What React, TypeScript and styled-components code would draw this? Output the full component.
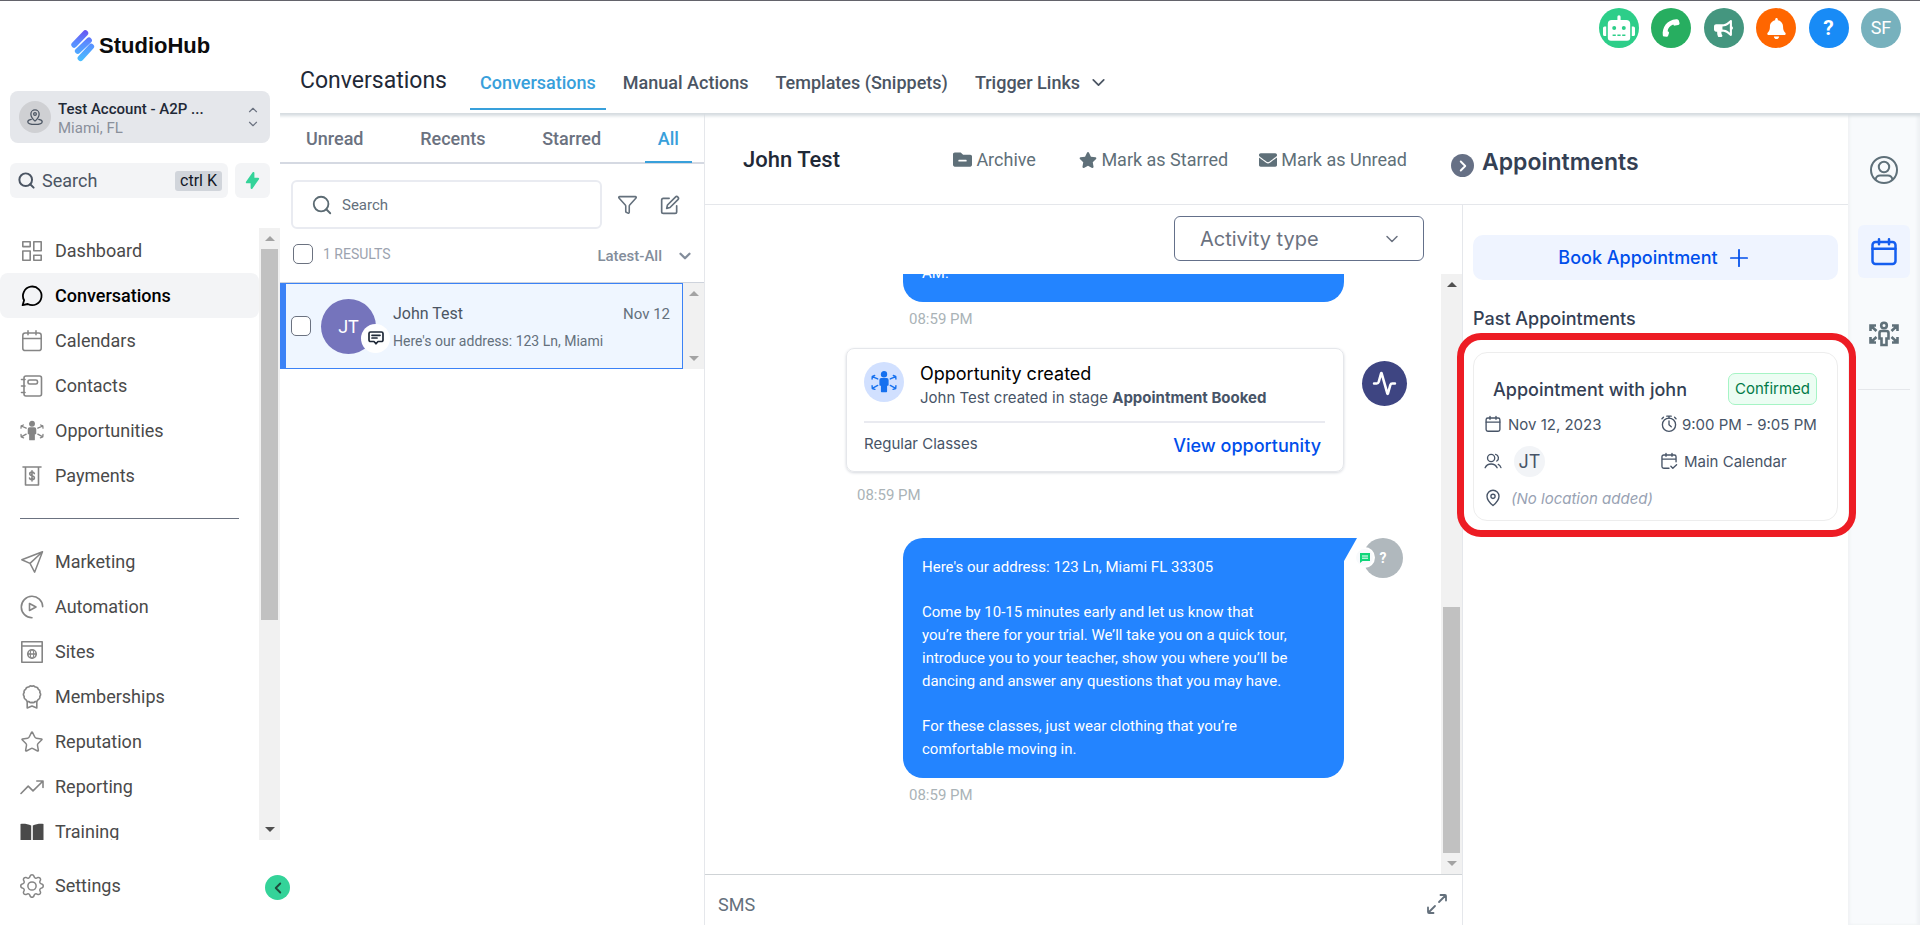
import React from "react";
import styled, { createGlobalStyle } from "styled-components";
import { Search, Funnel, ChevronDown, ChevronUp, ChevronRight, ChevronLeft, Plus, Activity, Star } from "lucide-react";
import { FaRobot, FaBullhorn, FaBell, FaFolderMinus, FaStar, FaEnvelope } from "react-icons/fa";
import { BsGear } from "react-icons/bs";
import { FiEdit } from "react-icons/fi";
import { HiLightningBolt } from "react-icons/hi";

const GlobalStyle = createGlobalStyle`
  * { box-sizing: border-box; }
  body { margin: 0; background: #fff; font-family: Roboto, sans-serif; color: #4b5563; }
  button, input, select { font: inherit; color: inherit; margin: 0; }
  button { background: none; border: 0; padding: 0; cursor: pointer; }
  a { color: inherit; text-decoration: none; }
  h1, h2, h3, p { margin: 0; padding: 0; font-weight: inherit; }
  svg { flex: none; display: block; }
`;

/* ---------- icons ---------- */

type LineProps = { size: number; box?: number; weight?: number; children: React.ReactNode };
const Line = ({ size, box = 24, weight = 2, children }: LineProps) => (
  <svg width={size} height={size} viewBox={`0 0 ${box} ${box}`} fill="none" stroke="currentColor"
    strokeWidth={weight} strokeLinecap="round" strokeLinejoin="round" aria-hidden="true">{children}</svg>
);

const DashboardIcon = () => (
  <Line size={24} weight={1.6}><rect x="2.8" y="2.8" width="7.4" height="4.8" /><rect x="13.8" y="2.8" width="7.4" height="9" />
    <rect x="2.8" y="12" width="7.4" height="9.2" /><rect x="13.8" y="16.2" width="7.4" height="5" /></Line>
);
const ChatIcon = () => (
  <Line size={24} weight={1.8}><path d="M2.6 21.2l1.5-4.9A9.3 9.3 0 1 1 7.8 20z" /></Line>
);
const CalendarIcon = ({ size = 24, weight = 1.5 }) => (
  <Line size={size} weight={weight}><rect x="2.8" y="4" width="18.4" height="17.6" rx="2.4" /><path d="M2.8 9.4h18.4M8 1.8v4M16 1.8v4" /></Line>
);
const CalendarCheckIcon = () => (
  <Line size={18} weight={1.8}><path d="M21.4 13V6.4A2.4 2.4 0 0 0 19 4H5a2.4 2.4 0 0 0-2.4 2.4V19.2A2.4 2.4 0 0 0 5 21.6h7M2.8 9.4h18.4M8 1.8v4M16 1.8v4M14.5 19l2.600 2.600 5-4.600" /></Line>
);
const ContactsIcon = () => (
  <Line size={24} weight={1.6}><rect x="4" y="2" width="17.5" height="20" rx="2" /><rect x="8" y="6" width="9.5" height="4" rx="1.6" />
    <path d="M1.5 5.500H5M1.5 12H5M1.5 18.500H5" /></Line>
);
const PersonArrowsIcon = ({ size = 24 }) => (
  <Line size={size} weight={1.3}>
    <circle cx="12" cy="4.8" r="2.3" fill="currentColor" />
    <path d="M9.6 9h4.8a1.2 1.2 0 0 1 1.2 1.200v4.500h-1.400v6H9.800v-6H8.400v-4.500A1.200 1.200 0 0 1 9.600 9z" fill="currentColor" />
    <path d="M6.200 9.200L1.200 7M1 9.200l.2-2.400 2.200-.8M6.200 15.200l-5 2.600M1 15.400l.2 2.600 2.400.8M17.800 9.200l5-2.200M23 9.200l-.2-2.400-2.200-.8M17.800 15.200l5 2.600M23 15.400l-.2 2.600-2.400.8" />
  </Line>
);
const RailPeopleIcon = () => (
  <svg width="32" height="26" viewBox="0 0 32 26" fill="none" stroke="currentColor" strokeWidth="2.6" aria-hidden="true">
    <circle cx="16" cy="4.5" r="2.8" />
    <path d="M13.5 10h5a2 2 0 0 1 2 2v5.500h-2V24h-5v-6.500h-2V12a2 2 0 0 1 2-2z" />
    <path d="M2.500 10V4.500H8M2.500 4.500l6 5.500M29.500 10V4.500H24M29.500 4.500l-6 5.500M2.500 16v5.500H8M2.500 21.500l6-5.500M29.500 16v5.500H24M29.500 21.500l-6-5.500" />
  </svg>
);
const PaymentsIcon = () => (
  <Line size={24} weight={1.6}><path d="M3 3h18M5.500 3v18h13V3" /><path d="M14.300 9.600c-.3-1-1.200-1.500-2.300-1.500-1.300 0-2.300.6-2.300 1.800 0 2.500 4.700 1.300 4.700 3.900 0 1.200-1 1.900-2.400 1.900-1.300 0-2.300-.6-2.500-1.700M12 6.800v10.200" /></Line>
);
const MarketingIcon = () => (
  <Line size={24} weight={1.5}><path d="M22.500 1.800L1.800 9.800l8.200 3.600 4.600 8.800zM10 13.400L22.500 1.800" /></Line>
);
const AutomationIcon = () => (
  <Line size={24} weight={1.6}><path d="M12 22.700A10.700 10.700 0 1 1 22.700 11.600" /><path d="M9.500 8.500v7l6.500-3.500z" /></Line>
);
const SitesIcon = () => (
  <Line size={24} weight={1.6}><path d="M1.800 1.800h20.400v20.400H1.800zM1.800 6h20.400" /><circle cx="12" cy="14" r="4.200" /><path d="M7.800 14h8.400" />
    <ellipse cx="12" cy="14" rx="1.700" ry="4.200" strokeWidth="1.1" /></Line>
);
const AwardIcon = () => (
  <Line size={24} weight={1.6}>
    <path d="M12 1.200Q14 .2 15.200 2 17.800 1.800 18.200 4.200 20.600 5.200 19.800 7.600 21.400 9.600 19.800 11.400 20.400 13.800 18 14.800 17.400 17 15 16.600 13.600 18.200 12 17.200 10.400 18.200 9 16.600 6.600 17 6 14.800 3.600 13.800 4.200 11.400 2.600 9.600 4.200 7.600 3.400 5.200 5.800 4.200 6.200 1.800 8.800 2 10 .2 12 1.200z" />
    <path d="M7.200 17v6l4.800-2 4.800 2v-6" />
  </Line>
);
const ReportingIcon = () => (
  <Line size={24} weight={1.6}><path d="M1 18.500l7.200-7.400 4.800 4.800L23 6M16.800 6H23v6.400" /></Line>
);
const TrainingIcon = () => (
  <svg width="24" height="24" viewBox="0 0 24 24" fill="#4a4a4a" aria-hidden="true">
    <path d="M.5 4C4 3.600 8 4 11.200 5.600V22C8 20.500 4 20 .5 20.200zM23.500 4C20 3.600 16 4 12.800 5.600V22c3.200-1.500 7.200-2 10.700-1.800z" />
  </svg>
);
const PlaceIcon = () => (
  <Line size={18} weight={1.7}><path d="M12 17.500s-5.500-4.600-5.500-9.400a5.500 5.500 0 0 1 11 0c0 4.800-5.500 9.400-5.500 9.400z" /><circle cx="12" cy="8" r="1.8" />
    <path d="M7 15.200c-2.700.5-4.600 1.600-4.600 3 0 2 4.300 3.600 9.600 3.600s9.600-1.600 9.600-3.600c0-1.400-1.900-2.500-4.600-3" /></Line>
);
const PinIcon = () => (
  <Line size={18} weight={1.8}><path d="M12 22s-8-6.500-8-12.400a8 8 0 0 1 16 0C20 15.500 12 22 12 22z" /><circle cx="12" cy="9.800" r="2.8" /></Line>
);
const UsersIcon = () => (
  <Line size={18} weight={1.8}><circle cx="9.500" cy="8" r="4.800" /><path d="M1.500 21c1.600-3.400 4.500-5 8-5s6.400 1.600 8 5M15.500 3.200a4.900 4.900 0 0 1 1.600 8.800M19 16.600c1.700.8 2.900 2.200 3.600 4.200" /></Line>
);
const StopwatchIcon = () => (
  <Line size={18} weight={1.8}><circle cx="12" cy="13" r="8.800" /><path d="M12 8v5l3 2.600M9 1.500h6M12 1.500v2.600M2.600 5l2-2M21.400 5l-2-2" /></Line>
);
const PhoneIcon = () => (
  <svg width="20" height="20" viewBox="0 0 20 20" fill="#fff" aria-hidden="true">
    <path d="M1.800 17.200C.8 9.600 6 1.800 15.200 1.200c1.300-.1 2.300.4 2.700 1.500l.6 2.400c.2 1-.3 1.700-1.300 1.900l-3 .6c-1 .2-1.500-.2-2-1.200C8.600 7.800 7 10 6.600 13.200c1 .3 1.500.8 1.400 1.700l-.7 2.300c-.3 1-1 1.500-1.900 1.500l-1.900-.1c-1 0-1.600-.5-1.700-1.400z" />
  </svg>
);
const ProfileIcon = () => (
  <Line size={30} box={30} weight={2}><circle cx="15" cy="15" r="13" /><circle cx="15" cy="12" r="5.200" /><path d="M6.500 24.500c.6-2.700 2.300-4 4.600-4h7.800c2.300 0 4 1.300 4.600 4" /></Line>
);
const SmsBadgeIcon = () => (
  <Line size={18} box={18} weight={1.7}><path d="M3.500 3h11a1.500 1.500 0 0 1 1.500 1.500v6.500a1.500 1.500 0 0 1-1.500 1.500H11l-2 2.300-2-2.300H3.500A1.500 1.500 0 0 1 2 11V4.500A1.500 1.500 0 0 1 3.500 3zM5 6.300h8M5 9h5" /></Line>
);
const GreenChatIcon = () => (
  <svg width="12" height="12" viewBox="0 0 12 12" aria-hidden="true"><path d="M1 1h10v8H3.500L1 11z" fill="#0fd67a" /><path d="M3 4h6M3 6.200h6" stroke="#fff" strokeWidth="1" /></svg>
);
const ExpandIcon = () => (
  <Line size={22} box={22} weight={1.8}><path d="M13 9l6.500-6.500M14.500 2H19a1 1 0 0 1 1 1v4.500M9 13l-6.500 6.500M2 14.500V19a1 1 0 0 0 1 1h4.500" /></Line>
);
const BrandMark = () => (
  <svg width="24" height="34" viewBox="0 0 24 34" aria-hidden="true">
    <defs><linearGradient id="brand" x1="0" y1="0" x2="0" y2="34" gradientUnits="userSpaceOnUse">
      <stop offset="0" stopColor="#6a4cf0" /><stop offset=".4" stopColor="#5b8bff" /><stop offset="1" stopColor="#45c4ff" /></linearGradient></defs>
    <path d="M3.200 15.800L14.300 4.200M6.800 22L18 11.400M9.500 29.200L20.200 17.600" fill="none" stroke="url(#brand)" strokeWidth="5.800" strokeLinecap="round" />
  </svg>
);

/* ---------- scrollbar ---------- */

const ScrollTrack = styled.div`
  display: flex; flex-direction: column; align-items: center; flex: none;
  width: 21px; background: #f1f1f1;
`;
const ScrollArrow = styled.span<{ $dark?: boolean; $down?: boolean }>`
  display: flex; flex: none; height: 21px; align-items: center;
  &::before {
    content: ""; border: 5px solid transparent; border-top-width: 0;
    border-bottom-color: ${p => (p.$dark ? "#505050" : "#a3a3a3")};
    ${p => p.$down && "transform: rotate(180deg);"}
  }
`;
const ScrollLane = styled.div<{ $end?: boolean }>`
  display: flex; flex-direction: column; flex: 1; min-height: 0;
  justify-content: ${p => (p.$end ? "flex-end" : "flex-start")};
`;
const ScrollThumb = styled.div<{ $size: string }>`width: 17px; height: ${p => p.$size}; background: #c1c1c1;`;

type BarProps = { thumb?: string; end?: boolean; upDark?: boolean; downDark?: boolean };
const Scrollbar = ({ thumb, end, upDark, downDark }: BarProps) => (
  <ScrollTrack aria-hidden="true">
    <ScrollArrow $dark={upDark} />
    <ScrollLane $end={end}>{thumb && <ScrollThumb $size={thumb} />}</ScrollLane>
    <ScrollArrow $dark={downDark} $down />
  </ScrollTrack>
);

/* ---------- shell and sidebar ---------- */

const Shell = styled.div`
  display: grid; grid-template-columns: 280px minmax(0, 1fr);
  height: 100vh; border-top: 1px solid #63636b; overflow: hidden;
`;
const Sidebar = styled.aside`
  position: relative; z-index: 3; display: flex; flex-direction: column; min-width: 0; min-height: 0; background: #fff;
`;
const Brand = styled.a`
  display: flex; align-items: center; gap: 4px; height: 90px; padding: 0 0 0 71px;
  font: 700 22px/26px "Liberation Sans", sans-serif; color: #0b0b0d;
`;
const Account = styled.button`
  display: flex; align-items: center; gap: 7px; height: 52px; margin: 0 10px; padding: 0 10px 0 9px;
  border-radius: 8px; background: #e5e7eb; text-align: left;
`;
const AccountIcon = styled.span`
  display: grid; place-items: center; width: 32px; height: 32px; border-radius: 50%; background: #cfd0d3; color: #4b5563;
`;
const AccountText = styled.span`
  display: flex; flex-direction: column; flex: 1; padding-top: 3px; font-size: 15px; line-height: 19px; color: #8a909b;
  strong { font-weight: 500; color: #1f2937; }
`;
const Sorter = styled.span`display: flex; flex-direction: column; color: #6b7280;`;
const SearchRow = styled.div`display: flex; gap: 7px; margin: 20px 10px 30px;`;
const QuickSearch = styled.label`
  display: flex; align-items: center; flex: 1; min-width: 0; gap: 6px; height: 35px; padding: 0 6px 0 7px;
  border-radius: 6px; background: #f3f4f6; font-size: 18px; color: #4b5563;
  input { flex: 1; min-width: 0; width: 0; padding: 0; border: 0; outline: 0; background: none; }
  input::placeholder { color: #4b5563; opacity: 1; }
  kbd { padding: 0 5px; border-radius: 3px; background: #d1d5db; font: 16px/20px Roboto, sans-serif; color: #111827; }
`;
const QuickAction = styled.button`
  display: grid; place-items: center; flex: none; width: 35px; height: 35px; border-radius: 6px; background: #f3f4f6; color: #34d399;
`;
const NavArea = styled.div`display: flex; flex: 1; min-height: 0;`;
const NavScroll = styled.nav`flex: 1; min-width: 0; overflow: hidden;`;
const NavLink = styled.a<{ $active?: boolean }>`
  display: flex; align-items: center; gap: 11px; height: 45px; padding-left: 20px; border-radius: 8px;
  font-size: 18px; font-weight: ${p => (p.$active ? 500 : 400)};
  background: ${p => (p.$active ? "#f3f4f6" : "transparent")};
  color: ${p => (p.$active ? "#000" : "#4a4a4a")};
  svg { color: ${p => (p.$active ? "#000" : "#858585")}; }
`;
const NavDivider = styled.hr`height: 1px; margin: 20px; border: 0; background: #6b7280;`;
const NavFooter = styled.div`height: 85px; padding-top: 23px;`;
const Collapse = styled.button`
  position: absolute; right: -10px; bottom: 25px; display: grid; place-items: center;
  width: 25px; height: 25px; border-radius: 50%; background: #34d399; color: #1f4b3c;
`;

const mainNav = [
  { label: "Dashboard", icon: <DashboardIcon /> },
  { label: "Conversations", icon: <ChatIcon />, active: true },
  { label: "Calendars", icon: <CalendarIcon /> },
  { label: "Contacts", icon: <ContactsIcon /> },
  { label: "Opportunities", icon: <PersonArrowsIcon /> },
  { label: "Payments", icon: <PaymentsIcon /> },
];
const toolNav = [
  { label: "Marketing", icon: <MarketingIcon /> },
  { label: "Automation", icon: <AutomationIcon /> },
  { label: "Sites", icon: <SitesIcon /> },
  { label: "Memberships", icon: <AwardIcon /> },
  { label: "Reputation", icon: <Star size={24} strokeWidth={1.5} /> },
  { label: "Reporting", icon: <ReportingIcon /> },
  { label: "Training", icon: <TrainingIcon /> },
];

/* ---------- top header ---------- */

const Main = styled.div`display: flex; flex-direction: column; min-width: 0; min-height: 0;`;
const TopBar = styled.header`
  position: relative; z-index: 2; flex: none; height: 112px; background: #fff;
  box-shadow: 0 1px 3px 2px #d5dce0;
`;
const Shortcuts = styled.div`
  display: flex; justify-content: space-between; width: 302px; margin-left: auto; margin-right: 19px; padding-top: 7px;
`;
const Shortcut = styled.button<{ $bg: string }>`
  display: grid; place-items: center; width: 40px; height: 40px; border-radius: 50%;
  background: ${p => p.$bg}; color: #fff; font-size: 18px; line-height: 24px;
  b { font-size: 21px; font-weight: 700; }
`;
const TopNav = styled.div`display: flex; align-items: flex-end; height: 65px; padding: 0 20px 3px;`;
const PageTitle = styled.h1`margin-right: 23px; font-size: 23px; line-height: 59px; color: #1f2937; font-weight: 400;`;
const Tabs = styled.nav`display: flex; gap: 7px;`;
const TopTab = styled.a<{ $active?: boolean }>`
  display: flex; align-items: center; gap: 8px; height: 54px; padding: 0 10px; font-size: 18px; font-weight: 500;
  color: ${p => (p.$active ? "#38a0db" : "#4b5563")};
  border-bottom: 2px solid ${p => (p.$active ? "#38a0db" : "transparent")};
`;

/* ---------- conversation list ---------- */

const Content = styled.div`display: flex; flex: 1; min-height: 0;`;
const ListPane = styled.section`
  flex: none; width: 425px; padding-top: 3px; border-right: 1px solid #e5e7eb;
`;
const ListTabs = styled.div`
  display: flex; justify-content: space-between; height: 48px; padding: 0 12px 0 13px; border-bottom: 2px solid #d5d9e2;
`;
const ListTab = styled.button<{ $active?: boolean }>`
  height: 47px; padding: 0 13px; font-size: 18px; font-weight: 500;
  color: ${p => (p.$active ? "#38a0db" : "#6b7280")};
  border-bottom: 2px solid ${p => (p.$active ? "#38a0db" : "transparent")};
`;
const SearchTools = styled.div`
  display: flex; align-items: center; gap: 22px; padding: 16px 24px 0 11px; color: #64707c;
`;
const ListSearch = styled.label`
  display: flex; align-items: center; flex: 1; gap: 9px; height: 49px; margin-right: -7px; padding: 0 18px;
  border: 2px solid #e9ebf1; border-radius: 6px; font-size: 15px; color: #5c6b73;
  input { flex: 1; min-width: 0; border: 0; padding: 0; outline: 0; }
  input::placeholder { color: #64707c; opacity: 1; }
`;
const ResultBar = styled.div`
  display: flex; align-items: center; gap: 10px; height: 54px; padding: 0 10px 3px 13px;
  border-bottom: 1px solid #ced3dc; font-size: 14px; color: #9ca3af;
`;
const Check = styled.input.attrs({ type: "checkbox" })`
  appearance: none; flex: none; width: 20px; height: 20px; border: 1px solid #6b7280; border-radius: 5px; background: #fff;
`;
const SortButton = styled.button`
  display: flex; align-items: center; gap: 14px; margin-left: auto; padding-top: 3px; font-size: 15px; font-weight: 500; color: #838d9b;
`;
const ThreadRow = styled.div`display: flex; height: 86px;`;
const Thread = styled.article`
  display: flex; align-items: center; flex: 1; min-width: 0; gap: 10px; padding: 0 12px 0 5px;
  border: 1px solid #3b82f6; border-left-width: 6px; background: #eff6ff;
`;
const ThreadAvatar = styled.span`
  position: relative; display: grid; place-items: center; flex: none; width: 55px; height: 55px;
  border-radius: 50%; background: #7574bc; color: #fff; font-size: 18px;
`;
const ThreadBadge = styled.span`
  position: absolute; right: -14px; bottom: 1px; display: grid; place-items: center;
  width: 29px; height: 29px; border-radius: 50%; background: #fff; color: #1f2937;
`;
const ThreadText = styled.div`flex: 1; min-width: 0; margin-left: 7px; padding-top: 2px;`;
const ThreadTop = styled.div`
  display: flex; justify-content: space-between; margin-bottom: 5px; font-size: 16px; line-height: 22px; color: #4b5563;
  time { font-size: 15px; color: #64707c; }
`;
const ThreadPreview = styled.p`font-size: 14px; line-height: 22px; color: #64707c;`;

/* ---------- chat ---------- */

const ChatPane = styled.section`display: flex; flex-direction: column; flex: 1; min-width: 0;`;
const ChatHeader = styled.div`
  display: flex; align-items: center; flex: none; height: 92px; padding: 2px 55px 0 38px; border-bottom: 1px solid #e5e7eb;
`;
const ContactName = styled.h2`flex: 1; font-size: 22px; line-height: 28px; font-weight: 500; color: #1f2937;`;
const ChatActions = styled.div`display: flex; gap: 31px;`;
const ChatAction = styled.button`
  display: flex; align-items: center; gap: 4px; min-width: 95px; font-size: 18px; line-height: 24px; color: #5f7079;
`;
const FilterBar = styled.div`display: flex; justify-content: flex-end; flex: none; height: 69px; padding: 11px 38px 0;`;
const SelectWrap = styled.label`
  display: flex; align-items: center; width: 250px; height: 45px; padding: 0 21px 0 25px;
  border: 1px solid #64708a; border-radius: 6px; color: #6b7280;
  select { flex: 1; appearance: none; border: 0; outline: 0; padding: 0; background: none; font: 20px/24px Inter, sans-serif; }
`;
const ChatBody = styled.div`display: flex; flex: 1; min-height: 0;`;
const Messages = styled.div`
  display: flex; flex-direction: column; justify-content: flex-end; flex: 1; gap: 19px; min-width: 0;
  overflow: hidden; padding: 0 34px 69px;
`;
const Entry = styled.div`display: flex; justify-content: flex-end; gap: 18px; flex: none;`;
const EntryBody = styled.div<{ $width: number }>`width: ${p => p.$width}px;`;
const AvatarSlot = styled.div`flex: none; width: 45px;`;
const Bubble = styled.div`
  position: relative; padding: 18px 40px 17px 19px; border-radius: 20px; background: #2384ff;
  color: #fff; font-size: 15px; line-height: 23px;
  p + p { margin-top: 22px; }
`;
const TailBubble = styled(Bubble)`
  border-top-right-radius: 0;
  &::after {
    content: ""; position: absolute; top: 0; left: 100%; width: 13px; height: 23px;
    background: #2384ff; clip-path: polygon(0 0, 100% 0, 0 100%);
  }
`;
const Stamp = styled.time`
  display: block; margin: 7px 0 0 6px; font-size: 15px; line-height: 20px; color: #aab3b7;
`;
const EventCard = styled.article`
  height: 124px; margin-bottom: 13px; padding: 13px 18px 0 17px; border: 1px solid #e5e7eb; border-radius: 8px;
  box-shadow: 0 1px 3px #d5d8de; font: 15px/23px Inter, sans-serif; color: #475467;
`;
const EventStamp = styled(Stamp)`margin: 0 0 14px 11px;`;
const EventTop = styled.div`display: flex; gap: 16px; height: 61px; border-bottom: 2px solid #e9eaf0;`;
const EventIcon = styled.span`
  display: grid; place-items: center; flex: none; width: 40px; height: 40px; border-radius: 50%; background: #d1e0ff; color: #1570ef;
`;
const EventTitle = styled.h3`font-size: 18px; line-height: 24px; color: #000;`;
const EventBottom = styled.div`
  display: flex; justify-content: space-between; padding: 9px 4px 0 0;
  a { font-size: 18px; font-weight: 500; line-height: 28px; color: #004eeb; }
`;
const PulseIcon = styled.span`
  display: grid; place-items: center; width: 45px; height: 45px; margin-top: 13px; border-radius: 50%; background: #3e4582; color: #fff;
`;
const UnknownAvatar = styled.span`
  position: relative; display: grid; place-items: center; width: 40px; height: 40px; margin-left: 1px; border-radius: 50%;
  background: #b0b8bd; color: #fff; font-size: 14px; font-weight: 700;
`;
const ChannelBadge = styled.span`
  position: absolute; left: -9px; top: 9px; display: grid; place-items: center; width: 21px; height: 21px; border-radius: 50%; background: #f8fafc;
  border: 2px solid #fff;
`;
const Composer = styled.footer`
  display: flex; align-items: center; justify-content: space-between; flex: none; height: 51px;
  padding: 8px 14px 0 13px; border-top: 1px solid #cfd3d6; font-size: 18px; color: #64707c;
`;

/* ---------- appointments ---------- */

const SidePane = styled.section`position: relative; display: flex; flex-direction: column; flex: none; width: 386px; font-family: Inter, sans-serif;`;
const SideHeader = styled.div`
  display: flex; align-items: center; flex: none; height: 92px; padding: 6px 0 0 20px; border-bottom: 1px solid #e5e7eb;
  h2 { font-size: 23px; font-weight: 600; line-height: 30px; color: #344054; }
`;
const CloseSide = styled.button`
  position: absolute; left: -11px; top: 41px; z-index: 1; display: grid; place-items: center; width: 23px; height: 23px;
  border-radius: 50%; background: #667085; color: #fff;
`;
const SideBody = styled.div`
  flex: 1; padding: 30px 10px 0; border-left: 1px solid #e5e7eb; color: #344054;
  h3 { margin: 26px 0 20px; font-size: 18px; font-weight: 500; line-height: 26px; }
`;
const BookButton = styled.button`
  display: flex; align-items: center; justify-content: center; gap: 7px; width: 100%; height: 45px;
  border-radius: 10px; background: #eff4ff; color: #004eeb; font-size: 18px; font-weight: 500;
`;
const Appointment = styled.article`
  position: relative; height: 169px; padding: 20px 20px 0 10px; border: 1px solid #ededed; border-radius: 14px;
  font-size: 15px; color: #475467;
`;
const Highlight = styled.span`
  position: absolute; inset: -20px -19px -17px -17px; border: 7px solid #ed1c24; border-radius: 24px; pointer-events: none;
`;
const AppointmentTop = styled.div`
  display: flex; align-items: center; justify-content: space-between; height: 32px; padding-left: 9px; margin-bottom: 1px;
  h4 { margin: 0; font-size: 18px; font-weight: 500; color: #344054; }
`;
const Status = styled.span`
  padding: 0 6px; border: 1px solid #a6f4c5; border-radius: 7px; background: #ecfdf3; color: #027a48; font-size: 15px; line-height: 30px;
`;
const Details = styled.div`
  display: grid; grid-template-columns: 176px 1fr; grid-template-rows: 36px 38px 36px; align-items: center;
  em { color: #98a2b3; }
`;
const Detail = styled.span<{ $gap?: number }>`display: flex; align-items: center; gap: ${p => p.$gap ?? 6}px; white-space: nowrap;`;
const Guest = styled.span`
  display: grid; place-items: center; width: 31px; height: 31px; border-radius: 50%; background: #f2f4f7; font-size: 18px;
`;
const Rail = styled.nav`
  display: flex; flex-direction: column; align-items: center; flex: none; width: 72px; padding: 30px 10px 0; background: #f8fafc;
  box-shadow: inset 2px 0 3px #f0f2f4, inset -3px 0 3px #eff1f4; color: #5f7079;
`;
const RailButton = styled.button<{ $active?: boolean }>`
  display: grid; place-items: center; width: 52px; height: 53px; margin-bottom: 29px; border-radius: 6px;
  background: ${p => (p.$active ? "#eff4ff" : "transparent")}; color: ${p => (p.$active ? "#155eef" : "inherit")};
`;
const RailLine = styled.hr`width: 100%; height: 1px; margin: 0; border: 0; background: #e5e7eb;`;

export default function App() {
  return (
    <>
      <GlobalStyle />
      <Shell>
        <Sidebar>
          <Brand href="#"><BrandMark />StudioHub</Brand>
          <Account>
            <AccountIcon><PlaceIcon /></AccountIcon>
            <AccountText><strong>Test Account - A2P ...</strong><span>Miami, FL</span></AccountText>
            <Sorter><ChevronUp size={14} /><ChevronDown size={14} /></Sorter>
          </Account>
          <SearchRow>
            <QuickSearch><Search size={19} strokeWidth={2.5} /><input placeholder="Search" aria-label="Search" /><kbd>ctrl K</kbd></QuickSearch>
            <QuickAction aria-label="Quick actions"><HiLightningBolt size={19} /></QuickAction>
          </SearchRow>
          <NavArea>
            <NavScroll>
              {mainNav.map(n => <NavLink key={n.label} href="#" $active={n.active}>{n.icon}{n.label}</NavLink>)}
              <NavDivider />
              {toolNav.map(n => <NavLink key={n.label} href="#">{n.icon}{n.label}</NavLink>)}
            </NavScroll>
            <Scrollbar thumb="65%" downDark />
          </NavArea>
          <NavFooter><NavLink href="#"><BsGear size={24} />Settings</NavLink></NavFooter>
          <Collapse aria-label="Collapse sidebar"><ChevronLeft size={18} strokeWidth={2.5} /></Collapse>
        </Sidebar>

        <Main>
          <TopBar>
            <Shortcuts>
              <Shortcut $bg="#2dce89" aria-label="Assistant"><FaRobot size={32} /></Shortcut>
              <Shortcut $bg="#27ae60" aria-label="Phone"><PhoneIcon /></Shortcut>
              <Shortcut $bg="#44967f" aria-label="Announcements"><FaBullhorn size={19} /></Shortcut>
              <Shortcut $bg="#ff6600" aria-label="Notifications"><FaBell size={21} /></Shortcut>
              <Shortcut $bg="#188bf6"><b>?</b></Shortcut>
              <Shortcut $bg="#77b1bd">SF</Shortcut>
            </Shortcuts>
            <TopNav>
              <PageTitle>Conversations</PageTitle>
              <Tabs>
                <TopTab href="#" $active>Conversations</TopTab>
                <TopTab href="#">Manual Actions</TopTab>
                <TopTab href="#">Templates (Snippets)</TopTab>
                <TopTab href="#">Trigger Links<ChevronDown size={21} /></TopTab>
              </Tabs>
            </TopNav>
          </TopBar>

          <Content>
            <ListPane>
              <ListTabs>
                <ListTab>Unread</ListTab><ListTab>Recents</ListTab><ListTab>Starred</ListTab><ListTab $active>All</ListTab>
              </ListTabs>
              <SearchTools>
                <ListSearch><Search size={22} /><input placeholder="Search" aria-label="Search conversations" /></ListSearch>
                <button aria-label="Filter"><Funnel size={21} strokeWidth={1.8} /></button>
                <button aria-label="New message"><FiEdit size={20} /></button>
              </SearchTools>
              <ResultBar>
                <Check aria-label="Select all" />1 RESULTS
                <SortButton>Latest-All<ChevronDown size={18} strokeWidth={3} /></SortButton>
              </ResultBar>
              <ThreadRow>
                <Thread>
                  <Check aria-label="Select John Test" />
                  <ThreadAvatar>JT<ThreadBadge><SmsBadgeIcon /></ThreadBadge></ThreadAvatar>
                  <ThreadText>
                    <ThreadTop><span>John Test</span><time>Nov 12</time></ThreadTop>
                    <ThreadPreview>Here's our address: 123 Ln, Miami</ThreadPreview>
                  </ThreadText>
                </Thread>
                <Scrollbar />
              </ThreadRow>
            </ListPane>

            <ChatPane>
              <ChatHeader>
                <ContactName>John Test</ContactName>
                <ChatActions>
                  <ChatAction><FaFolderMinus size={19} />Archive</ChatAction>
                  <ChatAction><FaStar size={18} />Mark as Starred</ChatAction>
                  <ChatAction><FaEnvelope size={18} />Mark as Unread</ChatAction>
                </ChatActions>
              </ChatHeader>
              <FilterBar>
                <SelectWrap>
                  <select aria-label="Activity type"><option>Activity type</option></select>
                  <ChevronDown size={20} strokeWidth={1.8} />
                </SelectWrap>
              </FilterBar>
              <ChatBody>
                <Messages>
                  <Entry>
                    <EntryBody $width={441}><Bubble><p>AM:</p></Bubble><Stamp>08:59 PM</Stamp></EntryBody>
                    <AvatarSlot />
                  </Entry>
                  <Entry>
                    <EntryBody $width={498}>
                      <EventCard>
                        <EventTop>
                          <EventIcon><PersonArrowsIcon size={26} /></EventIcon>
                          <div>
                            <EventTitle>Opportunity created</EventTitle>
                            <p>John Test created in stage <strong>Appointment Booked</strong></p>
                          </div>
                        </EventTop>
                        <EventBottom><span>Regular Classes</span><a href="#">View opportunity</a></EventBottom>
                      </EventCard>
                      <EventStamp>08:59 PM</EventStamp>
                    </EntryBody>
                    <AvatarSlot><PulseIcon><Activity size={25} strokeWidth={2.5} /></PulseIcon></AvatarSlot>
                  </Entry>
                  <Entry>
                    <EntryBody $width={441}>
                      <TailBubble>
                        <p>Here's our address: 123 Ln, Miami FL 33305</p>
                        <p>Come by 10-15 minutes early and let us know that<br />you’re there for your trial. We’ll take you on a quick tour,<br />introduce you to your teacher, show you where you’ll be<br />dancing and answer any questions that you may have.</p>
                        <p>For these classes, just wear clothing that you’re<br />comfortable moving in.</p>
                      </TailBubble>
                      <Stamp>08:59 PM</Stamp>
                    </EntryBody>
                    <AvatarSlot><UnknownAvatar>?<ChannelBadge><GreenChatIcon /></ChannelBadge></UnknownAvatar></AvatarSlot>
                  </Entry>
                </Messages>
                <Scrollbar thumb="44%" end upDark />
              </ChatBody>
              <Composer><span>SMS</span><button aria-label="Expand composer"><ExpandIcon /></button></Composer>
            </ChatPane>

            <SidePane>
              <SideHeader><h2>Appointments</h2></SideHeader>
              <CloseSide aria-label="Close panel"><ChevronRight size={18} strokeWidth={2.5} /></CloseSide>
              <SideBody>
                <BookButton>Book Appointment<Plus size={28} strokeWidth={1.5} /></BookButton>
                <h3>Past Appointments</h3>
                <Appointment>
                  <Highlight />
                  <AppointmentTop><h4>Appointment with john</h4><Status>Confirmed</Status></AppointmentTop>
                  <Details>
                    <Detail><CalendarIcon size={18} weight={1.8} />Nov 12, 2023</Detail>
                    <Detail $gap={4}><StopwatchIcon />9:00 PM - 9:05 PM</Detail>
                    <Detail $gap={12}><UsersIcon /><Guest>JT</Guest></Detail>
                    <Detail><CalendarCheckIcon />Main Calendar</Detail>
                    <Detail $gap={9}><PinIcon /><em>(No location added)</em></Detail>
                  </Details>
                </Appointment>
              </SideBody>
            </SidePane>

            <Rail>
              <RailButton aria-label="Contact"><ProfileIcon /></RailButton>
              <RailButton $active aria-label="Appointments"><CalendarIcon size={30} weight={2} /></RailButton>
              <RailButton aria-label="Opportunities"><RailPeopleIcon /></RailButton>
              <RailLine />
            </Rail>
          </Content>
        </Main>
      </Shell>
    </>
  );
}
